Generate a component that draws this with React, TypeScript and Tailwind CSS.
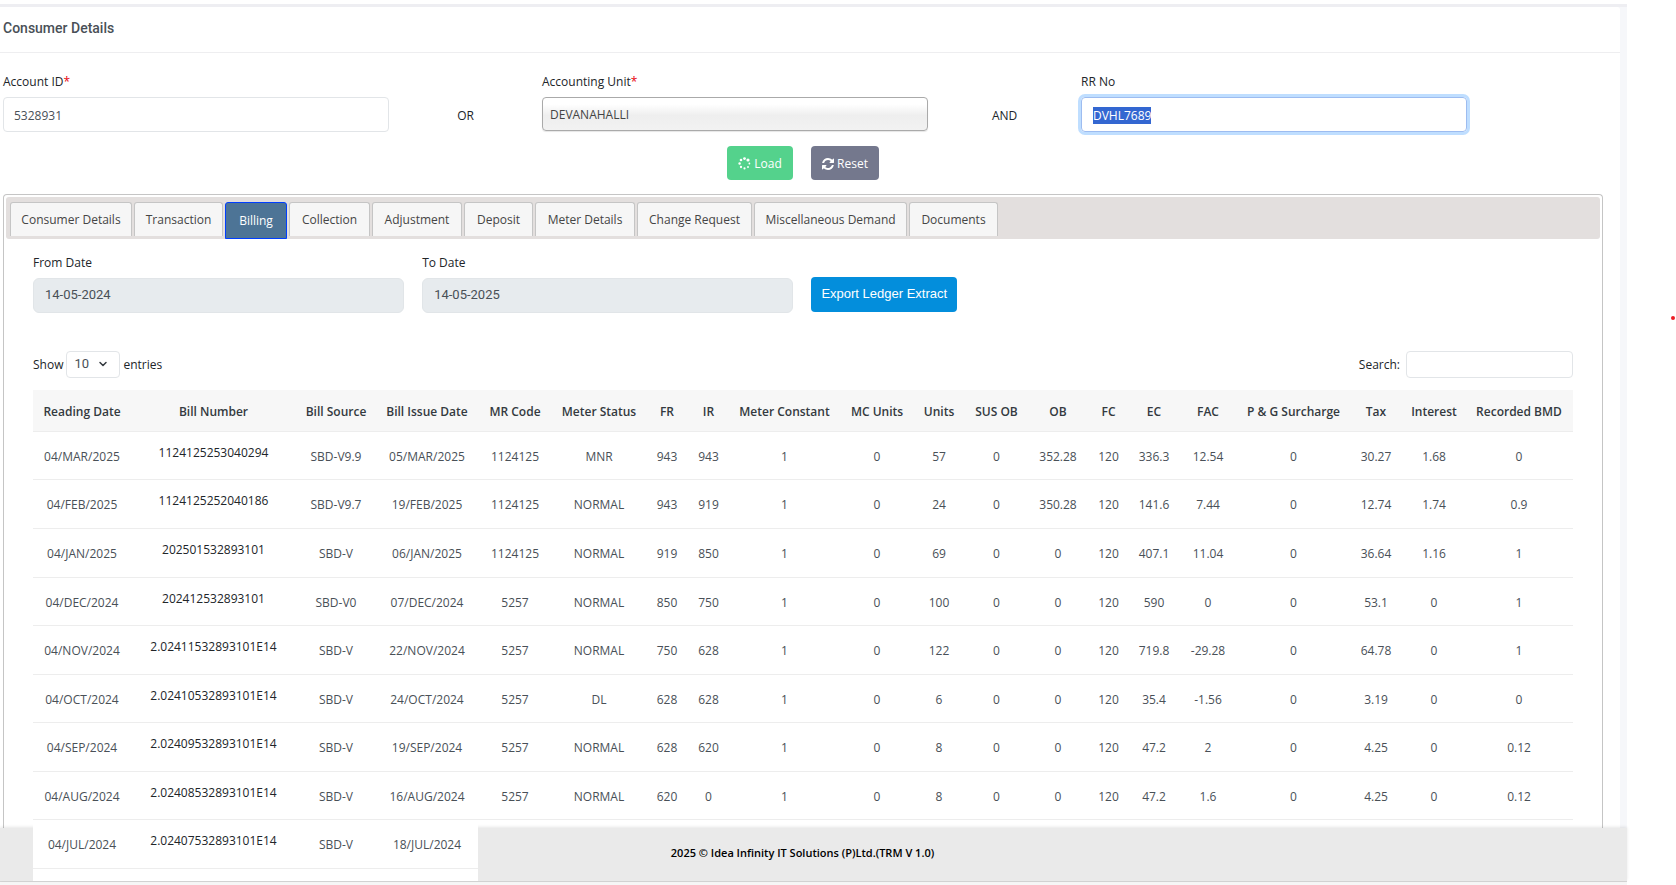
import { useEffect, useRef } from "react";
import { ChevronDown } from "lucide-react";

const tabs = [
  { label: "Consumer Details", width: "w-[122px]" },
  { label: "Transaction", width: "w-[89px]" },
  { label: "Billing", width: "w-[62px]", active: true },
  { label: "Collection", width: "w-[81px]" },
  { label: "Adjustment", width: "w-[90px]" },
  { label: "Deposit", width: "w-[69px]" },
  { label: "Meter Details", width: "w-[100px]" },
  { label: "Change Request", width: "w-[115px]" },
  { label: "Miscellaneous Demand", width: "w-[153px]" },
  { label: "Documents", width: "w-[89px]" },
];

const columns = [
  { label: "Reading Date", width: "w-[98px]" },
  { label: "Bill Number", width: "w-[165px]" },
  { label: "Bill Source", width: "w-[80px]" },
  { label: "Bill Issue Date", width: "w-[102px]" },
  { label: "MR Code", width: "w-[74px]" },
  { label: "Meter Status", width: "w-[94px]" },
  { label: "FR", width: "w-[42px]" },
  { label: "IR", width: "w-[41px]" },
  { label: "Meter Constant", width: "w-[111px]" },
  { label: "MC Units", width: "w-[74px]" },
  { label: "Units", width: "w-[50px]" },
  { label: "SUS OB", width: "w-[65px]" },
  { label: "OB", width: "w-[58px]" },
  { label: "FC", width: "w-[43px]" },
  { label: "EC", width: "w-[48px]" },
  { label: "FAC", width: "w-[60px]" },
  { label: "P & G Surcharge", width: "w-[111px]" },
  { label: "Tax", width: "w-[54px]" },
  { label: "Interest", width: "w-[62px]" },
  { label: "Recorded BMD", width: "w-[108px]" },
];

const rows = [
  { height: "h-12", cells: ["04/MAR/2025", "1124125253040294", "SBD-V9.9", "05/MAR/2025", "1124125", "MNR", "943", "943", "1", "0", "57", "0", "352.28", "120", "336.3", "12.54", "0", "30.27", "1.68", "0"] },
  { height: "h-[49px]", cells: ["04/FEB/2025", "1124125252040186", "SBD-V9.7", "19/FEB/2025", "1124125", "NORMAL", "943", "919", "1", "0", "24", "0", "350.28", "120", "141.6", "7.44", "0", "12.74", "1.74", "0.9"] },
  { height: "h-[49px]", cells: ["04/JAN/2025", "202501532893101", "SBD-V", "06/JAN/2025", "1124125", "NORMAL", "919", "850", "1", "0", "69", "0", "0", "120", "407.1", "11.04", "0", "36.64", "1.16", "1"] },
  { height: "h-12", cells: ["04/DEC/2024", "202412532893101", "SBD-V0", "07/DEC/2024", "5257", "NORMAL", "850", "750", "1", "0", "100", "0", "0", "120", "590", "0", "0", "53.1", "0", "1"] },
  { height: "h-[49px]", cells: ["04/NOV/2024", "2.02411532893101E14", "SBD-V", "22/NOV/2024", "5257", "NORMAL", "750", "628", "1", "0", "122", "0", "0", "120", "719.8", "-29.28", "0", "64.78", "0", "1"] },
  { height: "h-12", cells: ["04/OCT/2024", "2.02410532893101E14", "SBD-V", "24/OCT/2024", "5257", "DL", "628", "628", "1", "0", "6", "0", "0", "120", "35.4", "-1.56", "0", "3.19", "0", "0"] },
  { height: "h-[49px]", cells: ["04/SEP/2024", "2.02409532893101E14", "SBD-V", "19/SEP/2024", "5257", "NORMAL", "628", "620", "1", "0", "8", "0", "0", "120", "47.2", "2", "0", "4.25", "0", "0.12"] },
  { height: "h-12", cells: ["04/AUG/2024", "2.02408532893101E14", "SBD-V", "16/AUG/2024", "5257", "NORMAL", "620", "0", "1", "0", "8", "0", "0", "120", "47.2", "1.6", "0", "4.25", "0", "0.12"] },
  { height: "h-[49px]", cells: ["04/JUL/2024", "2.02407532893101E14", "SBD-V", "18/JUL/2024"] },
];

function SpinnerIcon() {
  return (
    <svg viewBox="0 0 26 26" className="size-[13px]" fill="currentColor" aria-hidden="true">
      <circle cx="13" cy="3.2" r="2.9" />
      <circle cx="20" cy="6" r="3.2" />
      <circle cx="22.8" cy="13" r="1.8" />
      <circle cx="20" cy="20" r="1.9" />
      <circle cx="13" cy="22.8" r="2.1" />
      <circle cx="6" cy="20" r="2.3" />
      <circle cx="3.2" cy="13" r="2.4" />
      <circle cx="6" cy="6" r="2.6" />
    </svg>
  );
}

function RefreshIcon() {
  return (
    <svg viewBox="0 128 1536 1536" className="size-3" fill="currentColor" aria-hidden="true">
      <path d="M1511 1056q0 5-1 7-64 268-268 434.500t-478 166.500q-146 0-282.500-55t-243.500-157l-129 129q-19 19-45 19t-45-19-19-45v-448q0-26 19-45t45-19h448q26 0 45 19t19 45-19 45l-137 137q71 66 161 102t187 36q134 0 250-65t186-179q11-17 53-117 8-23 30-23h192q13 0 22.500 9.500t9.500 22.500zm25-800v448q0 26-19 45t-45 19h-448q-26 0-45-19t-19-45 19-45l138-138q-148-137-349-137-134 0-250 65t-186 179q-11 17-53 117-8 23-30 23h-199q-13 0-22.500-9.500t-9.500-22.500v-7q65-268 270-434.500t480-166.500q146 0 284 55.500t245 156.500l130-129q19-19 45-19t45 19 19 45z" />
    </svg>
  );
}

function SearchForm() {
  const rrRef = useRef<HTMLInputElement>(null);
  useEffect(() => {
    rrRef.current?.focus();
    rrRef.current?.select();
  }, []);

  return (
    <form className="pt-5" onSubmit={(e) => e.preventDefault()}>
      <div className="grid grid-cols-12 gap-x-[18px] pr-[18px] pl-[3px]">
        <div className="col-span-3 flex flex-col gap-[6px]">
          <label htmlFor="account" className="leading-[18px]">
            Account ID<span className="text-red-600">*</span>
          </label>
          <input id="account" defaultValue="5328931" className="h-[35px] w-full rounded border border-[#e2e5e8] px-[10px] pt-[2px] text-[#495057] outline-none" />
        </div>
        <span className="self-end pb-[7px] text-center leading-[18px]">OR</span>
        <div className="col-span-3 flex flex-col gap-[6px]">
          <label htmlFor="unit" className="leading-[18px]">
            Accounting Unit<span className="text-red-600">*</span>
          </label>
          <select
            id="unit"
            className="h-[34px] w-full appearance-none rounded border border-[#aaaaaa] bg-linear-to-b from-white from-20% via-[#eeeeee] via-55% to-[#f2f2f2] px-[7px] pt-px text-[#444444] shadow-[0_1px_1px_rgba(0,0,0,0.1)] outline-none"
          >
            <option>DEVANAHALLI</option>
          </select>
        </div>
        <span className="self-end pb-[7px] text-center leading-[18px]">AND</span>
        <div className="col-span-3 flex flex-col gap-[6px]">
          <label htmlFor="rr" className="leading-[18px]">RR No</label>
          <input
            ref={rrRef}
            id="rr"
            defaultValue="DVHL7689"
            className="h-[35px] w-full rounded border border-[#9dbcf0] px-[11px] pt-[2px] text-[#495057] ring-3 ring-[#bfdeff] outline-none selection:bg-[#3367d1] selection:text-white"
          />
        </div>
      </div>
      <div className="flex justify-center gap-[18px] pt-[14px] pr-[14px]">
        <button type="submit" className="flex h-[34px] w-[66px] items-center justify-center gap-[3px] rounded bg-[#54d28c] pt-px text-white">
          <SpinnerIcon />
          Load
        </button>
        <button type="reset" className="flex h-[34px] w-[68px] items-center justify-center gap-[3px] rounded bg-[#74788d] pt-px text-white">
          <RefreshIcon />
          Reset
        </button>
      </div>
    </form>
  );
}

function BillingTable() {
  return (
    <table className="mt-3 w-full table-fixed border-separate border-spacing-0 text-center whitespace-nowrap">
      <colgroup>
        {columns.map((c) => (
          <col key={c.label} className={c.width} />
        ))}
      </colgroup>
      <thead>
        <tr className="h-[42px]">
          {columns.map((c) => (
            <th key={c.label} className="border-b border-[#ededed] bg-[#f7f7f7] p-0 pt-[2px] font-semibold text-[#343a40]">
              {c.label}
            </th>
          ))}
        </tr>
      </thead>
      <tbody>
        {rows.map((row) => (
          <tr key={row.cells[0]} className={row.height}>
            {row.cells.map((cell, i) => (
              <td
                key={i}
                className={
                  i === 1
                    ? "relative z-20 border-b border-[#ededed] bg-white p-0 pb-[6px] text-[#212529]"
                    : i < 4
                      ? "relative z-20 border-b border-[#ededed] bg-white p-0 pt-[2px] text-[#495057]"
                      : "border-b border-[#ededed] p-0 pt-[2px] text-[#495057]"
                }
              >
                {cell}
              </td>
            ))}
          </tr>
        ))}
        <tr className="h-3">
          <td colSpan={4} className="relative z-20 bg-white p-0" />
        </tr>
      </tbody>
    </table>
  );
}

function BillingPanel() {
  return (
    <section className="mt-[14px] mr-[17px] ml-[3px] rounded-t border border-b-0 border-[#c5c5c5] px-[2px] pt-[2px]">
      <div role="tablist" className="flex h-[42px] gap-[2px] rounded-[3px] bg-[#e3dfde] px-1 pt-[5px]">
        {tabs.map((t) => (
          <button
            key={t.label}
            role="tab"
            aria-selected={!!t.active}
            className={`${t.width} ${
              t.active
                ? "h-[37px] shrink-0 rounded-t-[3px] border border-[#003eff] bg-[#4d7496] text-white"
                : "h-[34px] shrink-0 rounded-t-[3px] border border-b-0 border-[#c5c5c5] bg-[#f6f6f6] text-[#454545]"
            }`}
          >
            {t.label}
          </button>
        ))}
      </div>
      <div className="pr-[27px] pl-[27px]">
        <div className="flex items-end gap-[18px] pt-[15px]">
          <div className="flex w-[24.1%] flex-col gap-[6px]">
            <label htmlFor="from" className="leading-[18px]">From Date</label>
            <input id="from" readOnly defaultValue="14-05-2024" className="h-[35px] rounded-md border border-[#e1e5e8] bg-[#e7ebee] px-[11px] pb-[2px] font-[Roboto] text-[13px] text-[#495057]" />
          </div>
          <div className="flex w-[24.1%] flex-col gap-[6px]">
            <label htmlFor="to" className="leading-[18px]">To Date</label>
            <input id="to" readOnly defaultValue="14-05-2025" className="h-[35px] rounded-md border border-[#e1e5e8] bg-[#e7ebee] px-[11px] pb-[2px] font-[Roboto] text-[13px] text-[#495057]" />
          </div>
          <button className="mb-px h-[35px] w-[146px] rounded bg-[#038edc] pb-[2px] font-['Liberation_Sans',sans-serif] text-[13px] text-white">
            Export Ledger Extract
          </button>
        </div>
        <div className="mt-[38px] flex items-center justify-between">
          <div className="flex items-center gap-[3px]">
            <label htmlFor="length">Show</label>
            <div className="relative">
              <select id="length" className="block h-[27px] w-[54px] appearance-none rounded border border-[#e2e5e8] bg-white px-[7px] pb-px font-[Roboto] text-[13px] text-[#495057]">
                <option>10</option>
              </select>
              <ChevronDown className="pointer-events-none absolute top-[7px] right-[11px] size-3 text-[#343a40]" strokeWidth={3} />
            </div>
            <span>entries</span>
          </div>
          <div className="flex items-center gap-[6px]">
            <label htmlFor="search">Search:</label>
            <input id="search" className="h-[27px] w-[167px] rounded border border-[#e2e5e8] px-2" />
          </div>
        </div>
        <BillingTable />
      </div>
    </section>
  );
}

export default function App() {
  return (
    <div className="relative w-full overflow-hidden bg-white pt-1 font-['Open_Sans',sans-serif] text-xs text-[#212529]">
      <div className="relative mr-[49px]">
        <main className="bg-[#f6f7fa] pr-[7px]">
          <div className="-mr-[7px] h-[3px] bg-[#eeeef2]" />
          <div className="rounded-tr-[3px] bg-white">
            <header className="border-b border-[#eeeef0] pt-[10px] pb-3 pl-[3px]">
              <h1 className="font-[Roboto] text-[14px] leading-[23px] font-medium text-[#495057]">Consumer Details</h1>
            </header>
            <SearchForm />
            <BillingPanel />
          </div>
        </main>
        <footer className="absolute inset-x-0 bottom-0 z-10 flex h-[53px] items-center justify-center bg-[#eaeaea] pr-[22px] pb-[2px] text-[11px] font-semibold text-black shadow-[0_-1px_3px_rgba(0,0,0,0.1)]">
          2025 © Idea Infinity IT Solutions (P)Ltd.(TRM V 1.0)
        </footer>
      </div>
      <div className="mr-[49px] h-1 border-t border-[#d6d6d6] bg-[#f6f6f6]" />
      <span className="absolute top-[316px] right-px size-1 rounded-full bg-[#ed1c24]" />
    </div>
  );
}
